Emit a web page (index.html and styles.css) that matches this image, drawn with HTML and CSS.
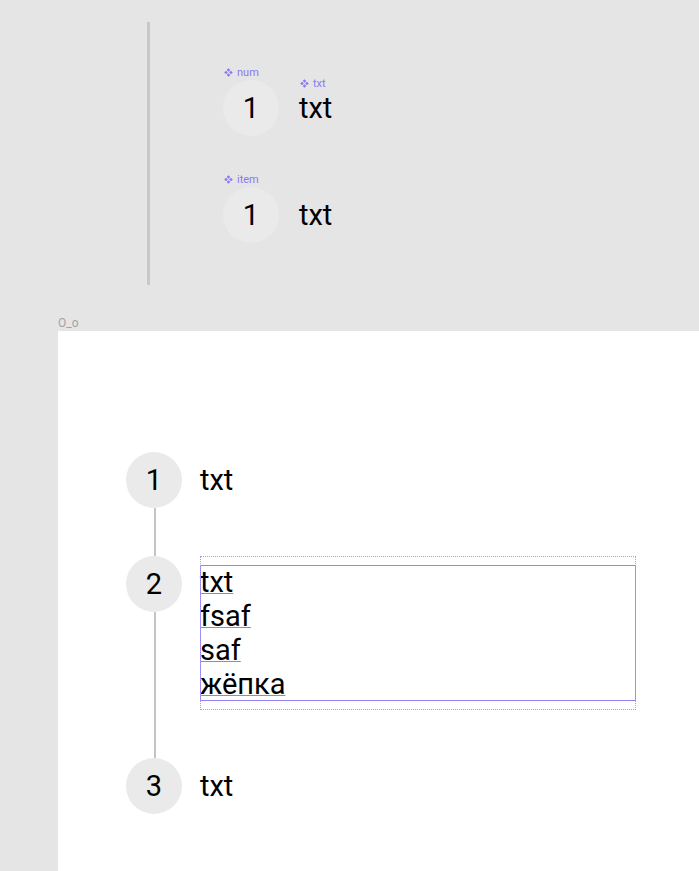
FILE: index.html
```html
<!DOCTYPE html>
<html lang="ru">
<head>
<meta charset="utf-8">
<title>Timeline</title>
<link rel="stylesheet" href="styles.css">
</head>
<body>
<section class="top">
  <div class="vline"></div>
  <div class="comps">
    <div class="row">
      <div class="comp">
        <span class="clabel"><svg class="cicon" viewBox="0 0 8 8"><path d="M4 0.2L5.6 1.8 4 3.4 2.4 1.8Z M1.8 2.4L3.4 4 1.8 5.6 0.2 4Z M6.2 2.4L7.8 4 6.2 5.6 4.6 4Z M4 4.6L5.6 6.2 4 7.8 2.4 6.2Z"/></svg>num</span>
        <div class="circle">1</div>
      </div>
      <div class="comp">
        <span class="clabel"><svg class="cicon" viewBox="0 0 8 8"><path d="M4 0.2L5.6 1.8 4 3.4 2.4 1.8Z M1.8 2.4L3.4 4 1.8 5.6 0.2 4Z M6.2 2.4L7.8 4 6.2 5.6 4.6 4Z M4 4.6L5.6 6.2 4 7.8 2.4 6.2Z"/></svg>txt</span>
        <div class="txt">txt</div>
      </div>
    </div>
    <div class="row comp item">
      <span class="clabel"><svg class="cicon" viewBox="0 0 8 8"><path d="M4 0.2L5.6 1.8 4 3.4 2.4 1.8Z M1.8 2.4L3.4 4 1.8 5.6 0.2 4Z M6.2 2.4L7.8 4 6.2 5.6 4.6 4Z M4 4.6L5.6 6.2 4 7.8 2.4 6.2Z"/></svg>item</span>
      <div class="circle">1</div>
      <div class="txt">txt</div>
    </div>
  </div>
</section>
<div class="frame-label">O_o</div>
<main class="frame">
  <div class="tl-item">
    <div class="tl-left"><div class="circle">1</div><div class="tl-line"></div></div>
    <div class="tl-text"><div class="txt">txt</div></div>
  </div>
  <div class="tl-item">
    <div class="tl-left"><div class="circle">2</div><div class="tl-line"></div></div>
    <div class="tl-text selected">
      <div class="txt-box">
        <div class="line"><span>txt</span></div>
        <div class="line"><span>fsaf</span></div>
        <div class="line"><span>saf</span></div>
        <div class="line"><span>жёпка</span></div>
      </div>
    </div>
  </div>
  <div class="tl-item">
    <div class="tl-left"><div class="circle">3</div></div>
    <div class="tl-text"><div class="txt">txt</div></div>
  </div>
</main>
</body>
</html>
```
FILE: styles.css
```css
* { box-sizing: border-box; }
html, body {
  margin: 0;
  padding: 0;
  background: #e5e5e5;
  font-family: Roboto, "Noto Sans", sans-serif;
  color: #000;
}
.top {
  display: flex;
  height: 316px;
  padding: 22px 0 0 147px;
}
.vline {
  width: 3px;
  height: 263px;
  background: #c8c8c8;
}
.comps {
  margin-left: 73px;
  padding-top: 58px;
  display: flex;
  flex-direction: column;
  gap: 51px;
}
.row {
  display: flex;
  align-items: center;
  gap: 20px;
}
.comp { position: relative; }
.clabel {
  position: absolute;
  left: 1px;
  bottom: calc(100% + 1px);
  display: flex;
  align-items: center;
  gap: 4px;
  font-size: 11px;
  line-height: 13px;
  color: #8a78f2;
  white-space: nowrap;
}
.cicon {
  width: 9px;
  height: 9px;
  fill: #8a78f2;
}
.circle {
  width: 56px;
  height: 56px;
  border-radius: 50%;
  background: #eaeaea;
  display: flex;
  align-items: center;
  justify-content: center;
  font-size: 29px;
  line-height: 34px;
  flex: none;
}
.txt {
  font-size: 29px;
  line-height: 34px;
}
.frame-label {
  height: 15px;
  padding-left: 58px;
  font-size: 12px;
  line-height: 15px;
  color: #a3a3a3;
}
.frame {
  margin-left: 58px;
  background: #fff;
  min-height: 540px;
  padding: 121px 0 0 68px;
}
.tl-item {
  display: flex;
  gap: 18px;
}
.tl-left {
  display: flex;
  flex-direction: column;
  align-items: center;
  width: 56px;
}
.tl-line {
  flex: 1;
  width: 2px;
  margin-left: 2px;
  background: #c4c4c4;
}
.tl-text {
  width: 436px;
  min-height: 56px;
  margin-bottom: 48px;
  display: flex;
  flex-direction: column;
  justify-content: center;
}
.tl-item:last-child .tl-text { margin-bottom: 0; }
.tl-text.selected {
  justify-content: flex-start;
  padding: 9px 0;
  outline: 1px dotted #a89cf2;
  outline-offset: -1px;
}
.txt-box {
  outline: 1px solid #9485f0;
  outline-offset: -1px;
  font-size: 29px;
  line-height: 34px;
}
.line span {
  text-decoration: underline;
  text-decoration-color: #8f80ee;
  text-decoration-thickness: 1px;
  text-underline-offset: 1px;
}
```
